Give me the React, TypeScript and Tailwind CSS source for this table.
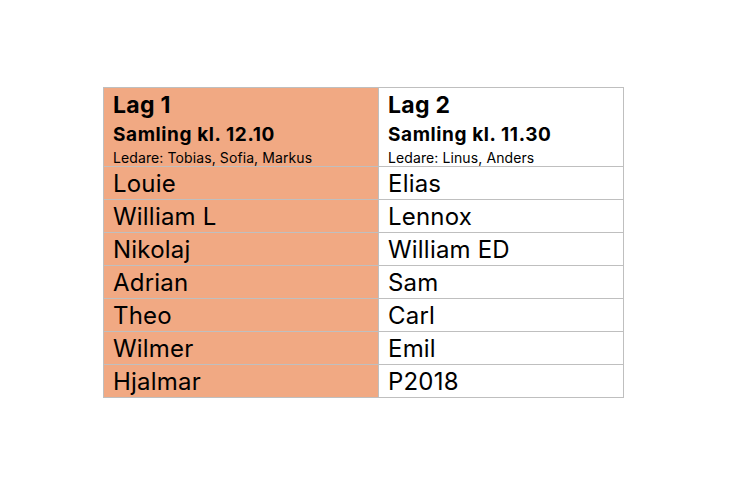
const teams = [
  ['Louie', 'Elias'],
  ['William L', 'Lennox'],
  ['Nikolaj', 'William ED'],
  ['Adrian', 'Sam'],
  ['Theo', 'Carl'],
  ['Wilmer', 'Emil'],
  ['Hjalmar', 'P2018'],
];

function Header({ title, time, leaders }: { title: string; time: string; leaders: string }) {
  return (
    <div className="flex flex-col px-[9px] pt-[3px]">
      <div className="text-[23px] font-bold leading-[29px] tracking-[0.3px]">{title}</div>
      <div className="text-[19px] font-bold leading-[30px] tracking-[0.6px]">{time}</div>
      <div className="text-[14px] leading-[16px] tracking-[0.1px]">{leaders}</div>
    </div>
  );
}

export default function App() {
  return (
    <div className="w-[742px] h-[480px] bg-white pt-[87px] pl-[103px] font-['Inter',sans-serif] text-black">
      <table className="border-collapse">
        <tbody>
          <tr>
            <td className="w-[275px] h-[79px] border border-[#bfbfbf] bg-[#f1a983] p-0 align-top">
              <Header title="Lag 1" time="Samling kl. 12.10" leaders="Ledare: Tobias, Sofia, Markus" />
            </td>
            <td className="w-[245px] border border-[#bfbfbf] p-0 align-top">
              <Header title="Lag 2" time="Samling kl. 11.30" leaders="Ledare: Linus, Anders" />
            </td>
          </tr>
          {teams.map(([a, b]) => (
            <tr key={a}>
              <td className="h-[33px] border border-[#bfbfbf] bg-[#f1a983] px-[9px] pt-[2px] pb-0 align-top text-[24px] leading-[30px] tracking-[0.2px]">
                {a}
              </td>
              <td className="h-[33px] border border-[#bfbfbf] px-[9px] pt-[2px] pb-0 align-top text-[24px] leading-[30px] tracking-[0.2px]">
                {b}
              </td>
            </tr>
          ))}
        </tbody>
      </table>
    </div>
  );
}
